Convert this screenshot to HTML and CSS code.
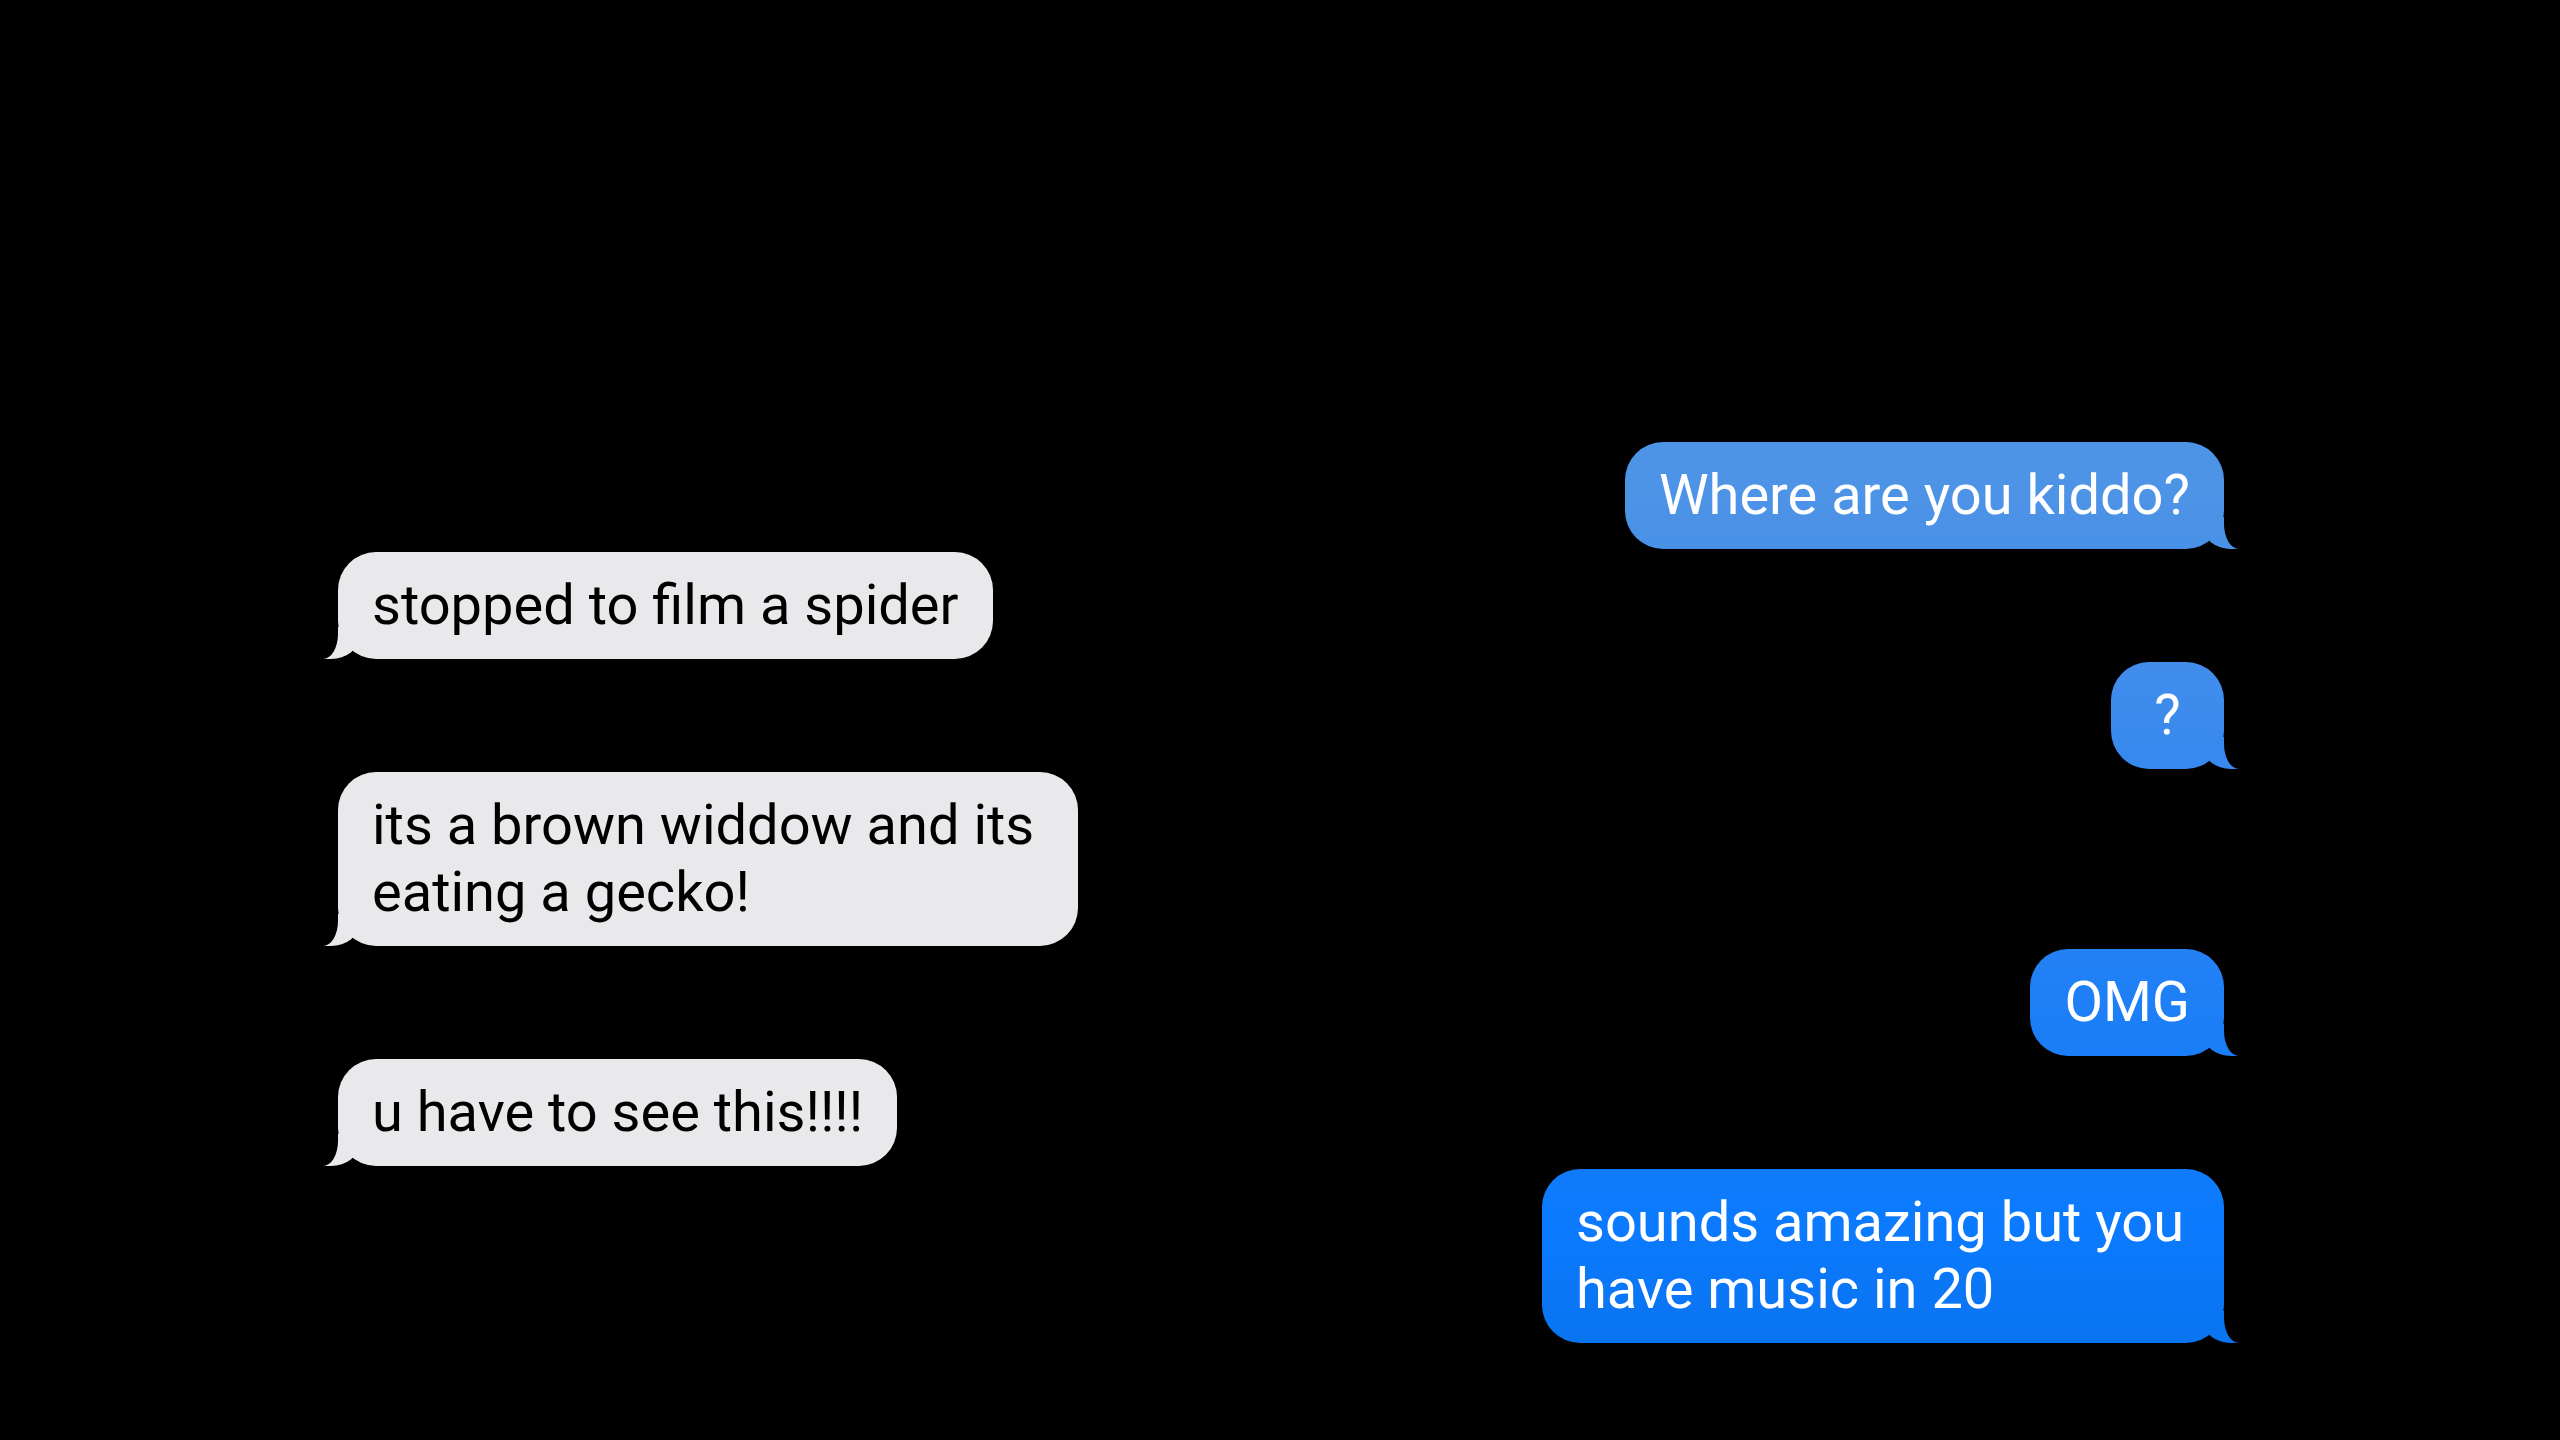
FILE: index.html
```html
<!DOCTYPE html>
<html lang="en">
<head>
<meta charset="utf-8">
<title>Messages</title>
<link rel="stylesheet" href="styles.css">
</head>
<body>
  <main class="thread">
    <p class="msg sent">Where are you kiddo?</p>
    <p class="msg received">stopped to film a spider</p>
    <p class="msg sent">?</p>
    <p class="msg received">its a brown widdow and its eating a gecko!</p>
    <p class="msg sent">OMG</p>
    <p class="msg received">u have to see this!!!!</p>
    <p class="msg sent">sounds amazing but you have music in 20</p>
  </main>
</body>
</html>
```
FILE: styles.css
```css
html, body {
  margin: 0;
  height: 100%;
  background: #000;
}

body {
  font-family: Roboto, "Liberation Sans", sans-serif;
}

.thread {
  display: flex;
  flex-direction: column;
  gap: 3px;
  padding: 442px 336px 0 338px;
}

.msg {
  position: relative;
  display: flex;
  justify-content: center;
  margin: 0;
  min-width: 113px;
  box-sizing: border-box;
  padding: 20px 34px;
  border-radius: 38px;
  font-size: 56px;
  line-height: 67px;
}

.msg::before,
.msg::after {
  content: "";
  position: absolute;
  bottom: 0;
}

.sent {
  align-self: flex-end;
  max-width: 682px;
  color: #fff;
  background: linear-gradient(to bottom,
    #4f95e5 0px,
    #4d93e6 495px,
    #3c8bed 716px,
    #1e7ff6 1002px,
    #0b7afe 1230px,
    #0a74f0 1345px) fixed;
}

.sent::before {
  right: -15px;
  width: 36px;
  height: 32px;
  background: inherit;
  border-bottom-left-radius: 28px 22px;
}

.sent::after {
  right: -45px;
  width: 45px;
  height: 34px;
  background: #000;
  border-bottom-left-radius: 15px 25px;
}

.received {
  align-self: flex-start;
  max-width: 740px;
  color: #000;
  background: #e9e9eb;
}

.received::before {
  left: -15px;
  width: 36px;
  height: 32px;
  background: inherit;
  border-bottom-right-radius: 28px 22px;
}

.received::after {
  left: -45px;
  width: 45px;
  height: 34px;
  background: #000;
  border-bottom-right-radius: 15px 25px;
}
```
